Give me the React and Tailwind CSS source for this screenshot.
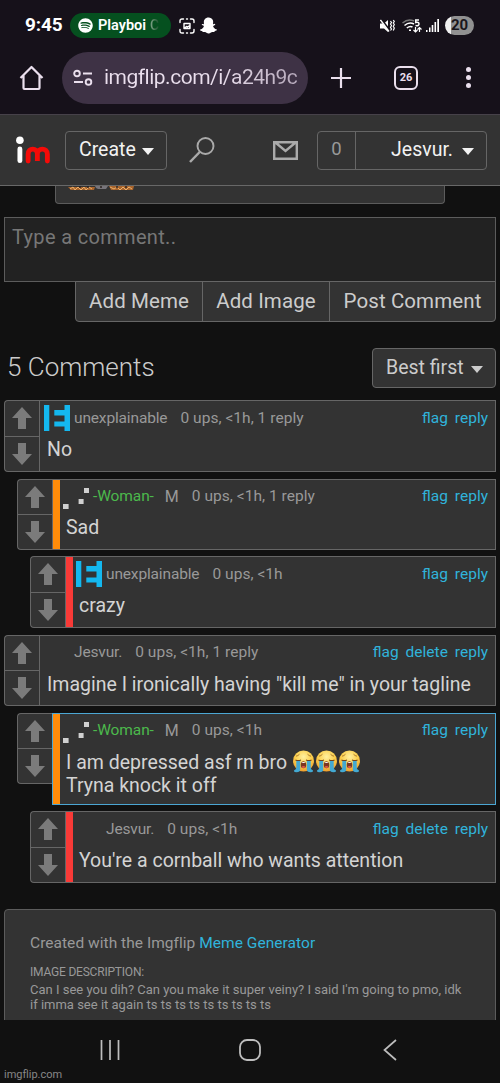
import { FaSpotify, FaSnapchatGhost } from "react-icons/fa";

const comments = [
  { icon: "bars", name: "unexplainable", meta: "0 ups, <1h, 1 reply", lines: ["No"], links: ["flag", "reply"], metaPad: "pt-px", box: "ml-1 h-[72px] mb-[7px]" },
  { icon: "dots", name: "-Woman-", green: true, rank: "M", meta: "0 ups, <1h, 1 reply", lines: ["Sad"], links: ["flag", "reply"], bar: "bg-[#ff8c0a]", metaPad: "pb-px", box: "ml-[17px] h-[71px] mb-[6px]" },
  { icon: "bars", name: "unexplainable", meta: "0 ups, <1h", lines: ["crazy"], links: ["flag", "reply"], bar: "bg-[#f93a37]", metaPad: "pt-px", box: "ml-[30px] h-[72px] mb-[7px]" },
  { name: "Jesvur.", meta: "0 ups, <1h, 1 reply", lines: ['Imagine I ironically having "kill me" in your tagline'], links: ["flag", "delete", "reply"], metaPad: "pb-px", box: "ml-1 h-[71px] mb-[7px]" },
  { icon: "dots", name: "-Woman-", green: true, rank: "M", meta: "0 ups, <1h", lines: ["I am depressed asf rn bro", "Tryna knock it off"], crying: 3, links: ["flag", "reply"], bar: "bg-[#ff8c0a]", active: true, metaPad: "pb-px", box: "ml-[17px] h-[92px] mb-[6px]" },
  { name: "Jesvur.", meta: "0 ups, <1h", lines: ["You're a cornball who wants attention"], links: ["flag", "delete", "reply"], bar: "bg-[#f93a37]", metaPad: "pt-px", box: "ml-[30px] h-[72px]" },
];

const Caret = ({ className }) => (
  <svg viewBox="0 0 12 7" className={`h-[7px] w-3 ${className}`} fill="currentColor">
    <path d="M0 0h12L6 7z" />
  </svg>
);

const Arrow = ({ down }) => (
  <svg viewBox="0 0 20 22" className={`h-[22px] w-5 ${down ? "rotate-180" : ""}`} fill="#7b7b7b">
    <path d="M10 0l10 11h-6v11H6V11H0z" />
  </svg>
);

const UserIcon = ({ type }) => {
  if (type === "bars") {
    return (
      <svg viewBox="0 0 26 26" className="h-[26px] w-[26px]" fill="#14b8ef">
        <path d="M0 0h5.3v26H0zM20.5 0H26v26h-5.5v-4.5H10.3v-5h10.2v-6H10.3V5h10.2z" />
      </svg>
    );
  }
  if (type === "dots") {
    return (
      <svg viewBox="0 0 26 26" className="h-[26px] w-[26px]" fill="#d0d0d0">
        <path d="M21 4h5v5h-5zM15.6 15h5v5h-5zM0 20h5.6v5H0z" />
      </svg>
    );
  }
  return <span className="h-[26px] w-[26px]" />;
};

const CryingFace = () => (
  <svg viewBox="0 0 23 23" className="h-[23px] w-[23px]">
    <defs>
      <radialGradient id="face" cx="50%" cy="30%" r="70%">
        <stop offset="0" stopColor="#fff0a0" />
        <stop offset="0.55" stopColor="#fbcf4d" />
        <stop offset="1" stopColor="#ee9d2c" />
      </radialGradient>
    </defs>
    <circle cx="11.5" cy="11" r="10.5" fill="url(#face)" />
    <path d="M4 6.2q2-.3 3.5-2M19 6.2q-2-.3-3.5-2" fill="none" stroke="#9b6420" strokeWidth=".8" />
    <path d="M3.5 10q2.5 1.3 5.5 0M14 10q3 1.3 5.5 0" fill="none" stroke="#70431a" strokeWidth="1.1" />
    <path d="M4.3 11h3.9v8.5q0 2.7-3.7 2.7-2.8 0-2.5-1.6 2.3-.8 2.3-3zM18.7 11h-3.9v8.5q0 2.7 3.7 2.7 2.8 0 2.5-1.6-2.3-.8-2.3-3z" fill="#43a9d2" />
    <ellipse cx="11.5" cy="14.8" rx="2.7" ry="3.5" fill="#7c3620" />
    <path d="M9.4 13q2.1-2 4.2 0z" fill="#fff" />
    <ellipse cx="11.5" cy="17" rx="1.7" ry="1.1" fill="#e3564b" />
  </svg>
);

const StatusBar = () => (
  <div className="flex h-[51px] items-center pl-[25px] pr-[26px] text-white">
    <span className="w-[45px] text-[19px] font-bold tracking-[-0.1px]">9:45</span>
    <div className="flex h-[25px] w-[101px] items-center rounded-full bg-[#05501f] pl-2">
      <FaSpotify className="h-[15px] w-[15px]" />
      <span className="ml-[5px] text-[14.5px] font-semibold">Playboi</span>
      <span className="ml-[4px] bg-gradient-to-r from-[#86aa90] to-[#144f29] bg-clip-text text-[14px] font-medium text-transparent">C</span>
    </div>
    <svg viewBox="0 0 16 16" className="ml-2 h-4 w-4" fill="none" stroke="white" strokeWidth="1.4" strokeLinecap="round">
      <path d="M1 4.5V3q0-2 2-2h1.5M11.5 1H13q2 0 2 2v1.5M15 11.5V13q0 2-2 2h-1.5M4.5 15H3q-2 0-2-2v-1.5M7.5 1h1M7.5 15h1" />
      <path d="M5 5.5h6v5H5zM5.5 10l2-1.5 1 .5 1.500-1L11 10" strokeLinejoin="round" />
    </svg>
    <FaSnapchatGhost className="ml-[5px] h-[17px] w-[17px]" />
    <svg viewBox="0 0 15 14" className="ml-auto h-[14px] w-[15px]" fill="white">
      <path d="M0 4.5h4L8 1v12L4 9.5H0z" />
      <path d="M1.5 1l8.5 11" stroke="#16111a" strokeWidth="2.4" />
      <path d="M.5 1l8.5 11.5" stroke="white" strokeWidth="1.3" />
      <path d="M10.5 2l1 1.5-1 1.5 1 1.5-1 2 1 1.5-1 1.5M13.3 1l1 1.5-1 1.5 1 1.5-1 2 1 1.5-1 2.5" fill="none" stroke="white" strokeWidth="1.2" />
    </svg>
    <svg viewBox="0 0 20 16" className="ml-[7px] h-4 w-5" fill="none" stroke="white" strokeWidth="1.5">
      <path d="M.5 5Q6 .2 12 3" stroke="#777" />
      <path d="M2.5 7.5Q7 3.500 12 6M4.800 10Q8 7.500 10.500 9M17 2h-3.300v2.500q3.300-.7 3.300 1.500t-3.500 1.600" />
      <path d="M7 11.5h2v1.500H7z" fill="white" stroke="none" />
      <path d="M13.500 9v5m-2-2l2 2 2-2M17.500 14V9.500m-2 2l2-2 2 2" strokeWidth="1.2" />
    </svg>
    <svg viewBox="0 0 13 13" className="ml-1 h-[13px] w-[13px]" fill="white">
      <path d="M0 11h1.500v2H0zM3 8.500h1.500V13H3zM5.700 6h1.600v7H5.700zM8.500 3h1.600v10H8.500zM11.300 0H13v13h-1.700z" />
    </svg>
    <div className="ml-[6px] flex h-[19px] w-[29px] items-center justify-center rounded-full bg-gradient-to-r from-[#f0f0f0] from-20% to-[#919191] to-20% text-[15px] font-bold text-[#1b171c]">
      20
    </div>
  </div>
);

const BrowserBar = () => (
  <div className="flex h-[63px] items-start pl-[19px] pr-[29px] pt-[1px] text-[#eadfed]">
    <svg viewBox="0 0 24 26" className="mt-[13px] h-[26px] w-[25px]" fill="none" stroke="currentColor" strokeWidth="2.2" strokeLinejoin="round">
      <path d="M1 13L12 2 23 13M4 10.5V23q0 1 1 1h14q1 0 1-1V10.5" />
    </svg>
    <div className="ml-[18px] flex h-[52px] w-[246px] items-center rounded-full bg-[#3e3245] pl-[11px]">
      <svg viewBox="0 0 20 18" className="h-[18px] w-5" fill="none" stroke="currentColor" strokeWidth="1.9">
        <circle cx="4" cy="4.5" r="2.8" />
        <path d="M10 4.5h9M1 13h9" />
        <circle cx="15.5" cy="13" r="2.8" />
      </svg>
      <span className="ml-[11px] whitespace-nowrap bg-gradient-to-r from-[#eadfed] from-60% to-[#b6a9bb] bg-clip-text text-[21px] tracking-[-0.5px] text-transparent">imgflip.com/i/a24h9c</span>
    </div>
    <svg viewBox="0 0 22 22" className="ml-[22px] mt-[15px] h-[22px] w-[22px]" stroke="currentColor" strokeWidth="2.2">
      <path d="M1 11h20M11 1v20" />
    </svg>
    <div className="ml-[42px] mt-[14px] flex h-6 w-6 items-center justify-center rounded-[6px] border-2 border-current text-[11px] font-bold">26</div>
    <div className="ml-auto mt-[15px] flex flex-col gap-[3px]">
      <span className="h-[5px] w-[5px] rounded-full bg-current" />
      <span className="h-[5px] w-[5px] rounded-full bg-current" />
      <span className="h-[5px] w-[5px] rounded-full bg-current" />
    </div>
  </div>
);

const SiteHeader = () => (
  <header className="flex h-[72px] items-center border-b border-t border-b-[#686868] border-t-[#464149] bg-[#333] pl-[16px]">
    <svg viewBox="0 0 35 28" className="h-7 w-[34px]" fill="none" strokeLinecap="round">
      <circle cx="4" cy="4" r="3.9" fill="white" />
      <path d="M4 13v12" stroke="white" strokeWidth="5" />
      <path d="M12.5 25.3v-7c0-7 9.5-7 9.5 0v7v-7c0-7 10.3-7 10.3 0v7" stroke="#f50b08" strokeWidth="5" />
    </svg>
    <button className="ml-[15px] flex h-[39px] w-[102px] items-center rounded-[4px] border border-[#666] pl-[13px] text-[19.5px] text-[#f2f2f2]">
      Create
      <Caret className="ml-[6px] mt-[3px]" />
    </button>
    <svg viewBox="0 0 26 26" className="ml-[22px] h-[26px] w-[26px]" fill="none" stroke="#aaa" strokeWidth="1.9">
      <circle cx="16.5" cy="9" r="8" />
      <path d="M10.7 15L1 25" strokeWidth="2.5" />
    </svg>
    <svg viewBox="0 0 25 19" className="ml-[58px] h-[19px] w-[25px]" fill="none" stroke="#aaa" strokeWidth="2.4">
      <path d="M1.2 1.2h22.6v16.6H1.2zM3 2l9.5 8L22 2" />
    </svg>
    <div className="ml-[19px] flex h-[39px] w-[170px] rounded-[4px] border border-[#666] text-[19.5px]">
      <span className="flex w-[38px] items-center justify-center border-r border-[#666] text-[18.5px] text-[#999]">0</span>
      <span className="flex flex-1 items-center justify-end pb-px pr-[12px] text-[#f2f2f2]">
        Jesvur.
        <Caret className="ml-[9px] mt-[3px]" />
      </span>
    </div>
  </header>
);

const Comment = ({ icon, name, green, rank, meta, lines, crying, links, bar, active, metaPad, box }) => (
  <div className={`mr-1 flex items-start ${box}`}>
    <div className={`flex w-[35px] shrink-0 flex-col rounded-l-[4px] border border-r-0 border-[#666] bg-[#333] ${active ? "h-[71px]" : "h-full"}`}>
      <div className="flex flex-1 items-center justify-center border-b border-[#666]"><Arrow /></div>
      <div className="flex flex-1 items-center justify-center"><Arrow down /></div>
    </div>
    <div className={`flex h-full min-w-0 flex-1 border bg-[#333] ${active ? "border-[#4ba6d3]" : "border-[#666]"}`}>
      {bar && <div className={`w-[7px] shrink-0 ${bar}`} />}
      <div className={`min-w-0 flex-1 pt-1 ${bar ? "pl-[3px]" : "pl-1"}`}>
        <div className="flex h-[26px] items-center whitespace-nowrap text-[15.5px] text-[#999]">
          <UserIcon type={icon} />
          <div className={`ml-1 flex flex-1 items-center ${metaPad}`}>
            <span className={green ? "tracking-[-0.1px] text-[#4cb94c]" : "tracking-[-0.15px]"}>{name}</span>
            {rank && <span className="ml-[11px] text-[16px]">{rank}</span>}
            <span className="ml-[13px] tracking-[0.04px]">{meta}</span>
            <span className="ml-auto mr-[7px] flex gap-[7px] text-[#30b3db]">
              {links.map((link) => (
                <a key={link}>{link}</a>
              ))}
            </span>
          </div>
        </div>
        <div className={`pl-[3px] text-[19.5px] leading-[23px] text-[#d4d4d4] ${rank && !active ? "pt-[6px]" : "pt-[7px]"}`}>
          {lines.map((line, i) => (
            <p key={line} className="flex whitespace-nowrap">
              {line}
              {crying && i === 0 && (
                <span className="-mt-px ml-[5px] flex">
                  <CryingFace />
                  <CryingFace />
                  <CryingFace />
                </span>
              )}
            </p>
          ))}
        </div>
      </div>
    </div>
  </div>
);

export default function App() {
  return (
    <div className="flex h-[1083px] w-[500px] flex-col overflow-hidden bg-[#111] font-['Roboto',sans-serif]">
      <div className="bg-[#16111a]">
        <StatusBar />
        <BrowserBar />
      </div>
      <SiteHeader />

      <main className="flex h-[834px] flex-col overflow-hidden">
        {/* bottom edge of the meme card */}
        <div className="ml-[55px] h-[18px] w-[390px] shrink-0 rounded-b-[4px] border border-t-0 border-[#5c5c5c] bg-[#333] pl-[12px]">
          <svg viewBox="0 0 66 5" className="h-[5px] w-[66px]" fill="#a8642c">
            <path d="M0 1h27l-1 3H3zM41 0h25l-1 4H43z" />
            <path d="M27 0h13l-2 3h-8l-2-1z" fill="#77747a" />
            <path d="M2 3l3-2 2 3 3-3 3 3 3-3 2 3 3-3 3 2M42 1l4 2 3-2 3 3 3-3 3 3 3-3 3 2" fill="none" stroke="#edb06a" />
            <path d="M12 0v2M20 0v2M33 0v2M49 0v2M58 0v2" stroke="#2d2320" strokeWidth="1.5" />
          </svg>
        </div>

        <div className="mx-1 mt-[13px] h-[65px] shrink-0 border border-[#5c5c5c] bg-[#222] pl-[7px] pt-[4px] text-[20px] tracking-[0.33px] text-[#777]">Type a comment..</div>
        <div className="-mt-px mr-1 flex h-[41px] w-[421px] shrink-0 self-end rounded-b-[4px] border border-[#666] bg-[#333] text-[20.5px] tracking-[0.1px] text-[#ccc]">
          <button className="w-[127px] border-r border-[#666]">Add Meme</button>
          <button className="w-[127px] border-r border-[#666]">Add Image</button>
          <button className="flex-1 whitespace-nowrap">Post Comment</button>
        </div>

        <div className="mb-[12px] ml-[7px] mr-1 mt-[26px] flex h-10 shrink-0 items-center justify-between">
          <h2 className="pb-[1px] text-[26px] font-light text-[#ccc]">5 Comments</h2>
          <button className="flex h-10 w-[124px] items-center rounded-[4px] border border-[#666] bg-[#333] pb-px pl-[13px] text-[19.5px] text-[#ccc]">
            Best first
            <Caret className="ml-[7px] mt-[3px]" />
          </button>
        </div>

        <div className="shrink-0">
          {comments.map((comment, i) => (
            <Comment key={i} {...comment} />
          ))}
        </div>

        <div className="mx-1 mt-[26px] h-[140px] shrink-0 rounded-t-[4px] border border-[#5c5c5c] bg-[#333] pl-[25px] pt-[23px] text-[#999]">
          <p className="text-[15.5px] leading-[20px] tracking-[0.04px]">
            Created with the Imgflip <a className="text-[#30b3db]">Meme Generator</a>
          </p>
          <p className="mt-[11px] text-[12px] leading-[16px] tracking-[-0.2px]">IMAGE DESCRIPTION:</p>
          <p className="mt-[2px] whitespace-nowrap text-[13px] leading-[15px]">
            Can I see you dih? Can you make it super veiny? I said I'm going to pmo, idk
            <br />
            if imma see it again ts ts ts ts ts ts ts ts ts
          </p>
        </div>
      </main>

      <nav className="h-[63px] pl-1 pt-[19px]">
        <div className="flex items-center pl-[96px] text-[#bdbdbd]">
          <svg viewBox="0 0 20 20" className="h-5 w-5" stroke="currentColor" strokeWidth="1.7">
            <path d="M1.500 0v20M10 0v20M18.500 0v20" />
          </svg>
          <svg viewBox="0 0 22 22" className="ml-[119px] h-[22px] w-[22px]" fill="none" stroke="currentColor" strokeWidth="1.8">
            <rect x="1" y="1" width="20" height="20" rx="7" />
          </svg>
          <svg viewBox="0 0 14 22" className="ml-[122px] h-[22px] w-[14px]" fill="none" stroke="currentColor" strokeWidth="1.7">
            <path d="M13 1L1.500 11 13 21" />
          </svg>
        </div>
        <p className="mt-[7px] text-[11px] leading-[14px] text-[#888]">imgflip.com</p>
      </nav>
    </div>
  );
}
